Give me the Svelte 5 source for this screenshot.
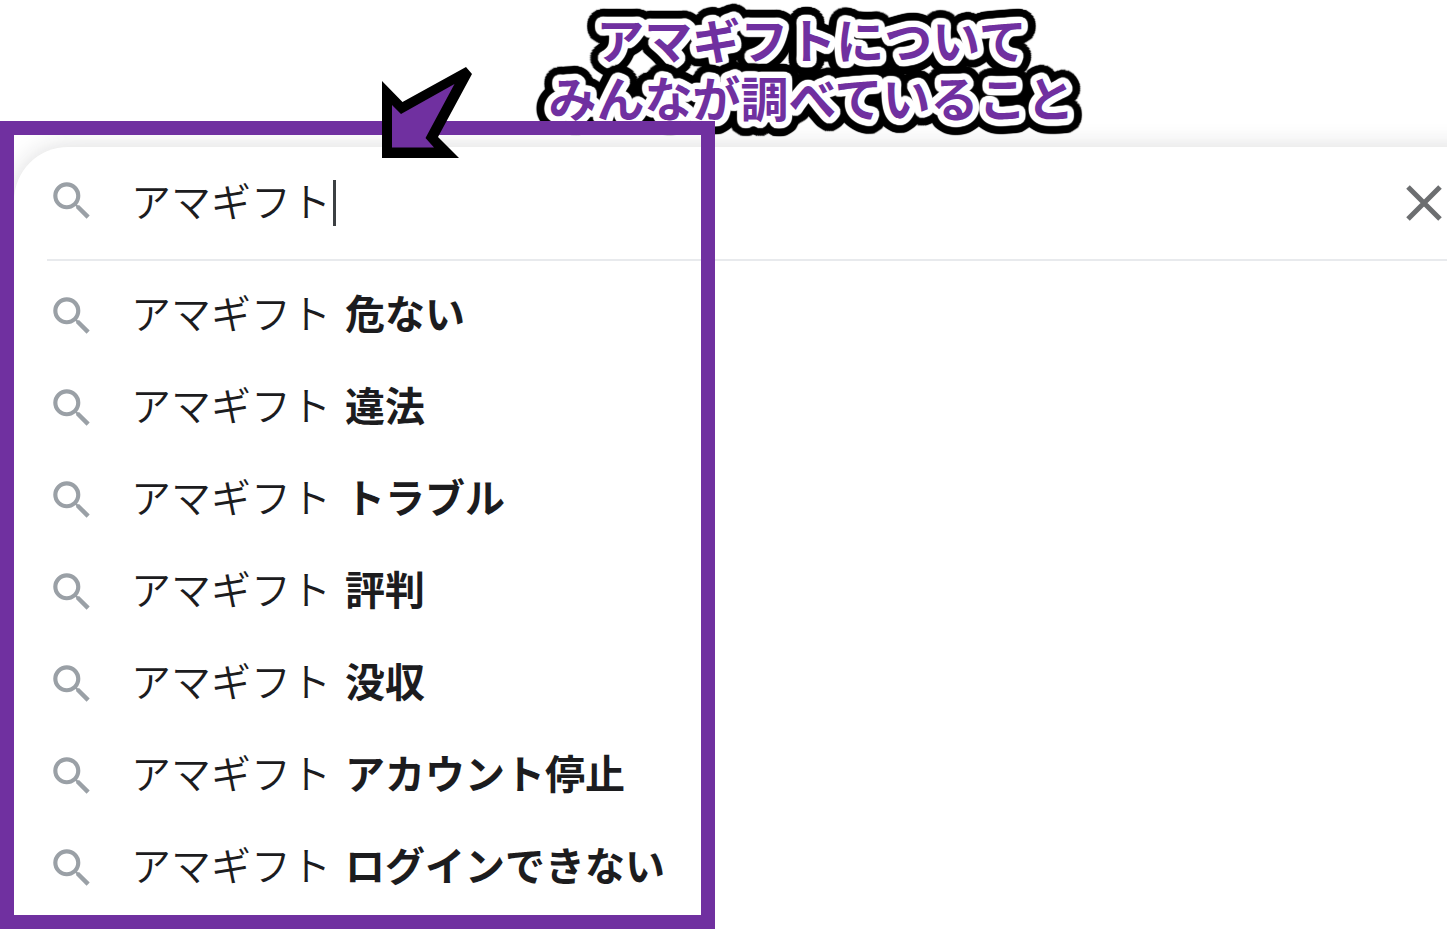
<script>
	let query = $state('アマギフト');
	const suggestions = ['危ない', '違法', 'トラブル', '評判', '没収', 'アカウント停止', 'ログインできない'];

	// Rounded outline: stacked shadows placed on circles around the glyphs.
	function ring(radius, color) {
		const steps = 48;
		return Array.from({ length: steps }, (_, i) => {
			const a = (i / steps) * Math.PI * 2;
			return `${(Math.cos(a) * radius).toFixed(1)}px ${(Math.sin(a) * radius).toFixed(1)}px 1px ${color}`;
		});
	}
	const outline = [...ring(3, '#fff'), ...ring(6, '#fff'), ...ring(10, '#000'), ...ring(14, '#000')].join(', ');
</script>

{#snippet searchIcon()}
	<svg class="search-icon" viewBox="0 0 24 24" aria-hidden="true">
		<path d="M15.5 14h-.79l-.28-.27A6.47 6.47 0 0 0 16 9.5 6.5 6.5 0 1 0 9.5 16c1.61 0 3.09-.59 4.23-1.57l.27.28v.79l5 4.99L20.49 19l-4.99-5zm-6 0C7.01 14 5 11.99 5 9.5S7.01 5 9.5 5 14 7.01 14 9.5 11.99 14 9.5 14z" />
	</svg>
{/snippet}

<main class="page">
	<h1 class="caption" style:text-shadow={outline}>アマギフトについて<br />みんなが調べていること</h1>

	<section class="panel">
		<form class="search" role="search">
			{@render searchIcon()}
			<input type="text" aria-label="検索" bind:value={query} />
			<span class="caret"></span>
			<button type="button" class="clear" aria-label="クリア" onclick={() => (query = '')}>
				<svg viewBox="0 0 36 36" aria-hidden="true"><path d="M2 2l32 32M34 2L2 34" /></svg>
			</button>
		</form>
		<ul class="list">
			{#each suggestions as s}
				<li>
					{@render searchIcon()}
					<span class="label">アマギフト <b>{s}</b></span>
				</li>
			{/each}
		</ul>
	</section>

	<div class="frame"></div>
	<svg class="arrow" viewBox="0 0 90 91" aria-hidden="true">
		<path d="M0 14L20.5 35L84 0L90 7L56 70L77 91H0z" fill="#000" />
		<path d="M10 38L19 47L72.5 17L43.5 71L52 80.500H10z" fill="#7030a0" />
	</svg>
</main>

<style>
	:global(body) {
		margin: 0;
		background: #fff;
	}
	.page {
		position: relative;
		overflow: hidden;
		font-family: 'Noto Sans CJK JP', sans-serif;
		color: #1c1c1e;
	}
	.caption {
		position: relative;
		z-index: 1;
		box-sizing: border-box;
		height: 147px;
		margin: 0;
		padding: 9px 0 0 176px;
		font-size: 48px;
		line-height: 58px;
		font-weight: 700;
		text-align: center;
		color: #7030a0;
	}
	.panel {
		margin-left: 14px;
		margin-right: -60px;
		padding: 0 60px 15px 33px;
		border-radius: 54px 0 0 0;
		background: #fff;
		box-shadow: 0 0 24px rgba(32, 33, 36, 0.16);
	}
	.search {
		display: flex;
		align-items: center;
		height: 112px;
		border-bottom: 2px solid #e8eaed;
	}
	.search-icon {
		flex: none;
		width: 50px;
		height: 50px;
		margin-right: 34px;
		fill: #9aa0a6;
	}
	.search .search-icon {
		margin-bottom: 4px;
	}
	input {
		width: 202px;
		padding: 0 0 6px;
		border: 0;
		outline: 0;
		background: none;
		font: inherit;
		font-size: 40px;
		font-weight: 350;
		color: inherit;
	}
	.caret {
		width: 3px;
		height: 46px;
		background: #3c4043;
	}
	.clear {
		display: flex;
		margin-left: auto;
		padding: 0 5px;
		border: 0;
		background: none;
		cursor: pointer;
	}
	.clear svg {
		width: 36px;
		height: 36px;
		fill: none;
		stroke: #6c6e70;
		stroke-width: 5;
	}
	.list {
		margin: 0;
		padding: 9px 0 0;
		list-style: none;
	}
	.list li {
		display: flex;
		align-items: center;
		height: 92px;
		font-size: 40px;
		font-weight: 350;
		line-height: 60px;
		white-space: nowrap;
	}
	.label {
		padding-bottom: 8px;
	}
	.list b {
		margin-left: 5px;
		font-weight: 700;
	}
	.frame {
		position: absolute;
		z-index: 2;
		top: 121px;
		bottom: 0;
		left: 0;
		box-sizing: border-box;
		width: 715px;
		border: 14px solid #7030a0;
		pointer-events: none;
	}
	.arrow {
		position: absolute;
		z-index: 3;
		top: 67px;
		left: 382px;
		width: 90px;
		height: 91px;
	}
</style>
